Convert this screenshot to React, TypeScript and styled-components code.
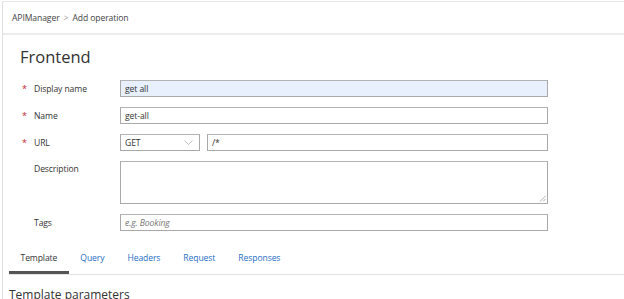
import React from "react";
import styled, { createGlobalStyle } from "styled-components";

const Global = createGlobalStyle`
  html, body { margin: 0; padding: 0; background: #fff; }
  body { font-family: "Open Sans", "Noto Sans", sans-serif; color: #333; overflow: hidden; }
  * { box-sizing: border-box; }
`;

const Page = styled.div`
  margin: 1px 0 0 2px;
  border-top: 1px solid #e6e6e6;
  border-left: 1px solid #e0e0e0;
  min-height: 298px;
`;

const Header = styled.div`
  height: 33px;
  border-bottom: 2px solid #ececec;
  display: flex;
  align-items: center;
  padding-left: 9px;
  font-size: 8.6px;
  color: #444;
  letter-spacing: -0.1px;
`;

const Sep = styled.span`
  color: #999;
  margin: 0 4px;
`;

const Title = styled.h1`
  margin: 12px 0 0 17px;
  font-size: 16.5px;
  font-weight: 400;
  color: #333;
  line-height: 20px;
`;

const Form = styled.div`
  display: flex;
  flex-direction: column;
  gap: 10px;
  margin-top: 13px;
`;

const Row = styled.div<{ $top?: boolean }>`
  display: grid;
  grid-template-columns: 117px 428px;
  align-items: ${(p) => (p.$top ? "start" : "center")};
`;

const Label = styled.div<{ $pt?: number }>`
  display: flex;
  align-items: center;
  font-size: 8.6px;
  color: #333;
  padding-left: 19px;
  padding-top: ${(p) => p.$pt ?? 0}px;
  letter-spacing: -0.1px;
`;

const Star = styled.span<{ $hidden?: boolean }>`
  color: #c4262e;
  width: 12px;
  font-size: 9px;
  visibility: ${(p) => (p.$hidden ? "hidden" : "visible")};
`;

const Input = styled.div<{ $filled?: boolean; $placeholder?: boolean; $h?: number }>`
  height: ${(p) => p.$h ?? 17}px;
  border: 1px solid #a9a9a9;
  border-top-color: #b3b3b3;
  background: ${(p) => (p.$filled ? "#e8f0fe" : "#fff")};
  font-size: 8.6px;
  padding: 0 4px;
  display: flex;
  align-items: center;
  color: ${(p) => (p.$placeholder ? "#777" : "#333")};
  font-style: ${(p) => (p.$placeholder ? "italic" : "normal")};
  position: relative;
  letter-spacing: -0.1px;
`;

const UrlGroup = styled.div`
  display: grid;
  grid-template-columns: 80px 1fr;
  gap: 7px;
`;

const Select = styled(Input)`
  justify-content: space-between;
  padding-right: 6px;
`;

const Grip = styled.svg`
  position: absolute;
  right: 1px;
  bottom: 1px;
`;

const Tabs = styled.div`
  margin: 22px 0 0 6px;
  display: flex;
  border-bottom: 1px solid #e3e3e3;
`;

const Tab = styled.div<{ $active?: boolean }>`
  padding: 0 11.5px;
  height: 21px;
  line-height: 11px;
  font-size: 8.6px;
  letter-spacing: -0.1px;
  color: ${(p) => (p.$active ? "#333" : "#1f6fc5")};
  border-bottom: 3px solid ${(p) => (p.$active ? "#555" : "transparent")};
`;

const Section = styled.div`
  margin: 12px 0 0 6px;
  font-size: 12px;
  line-height: 16px;
  color: #333;
`;

export default function App() {
  return (
    <>
      <Global />
      <Page>
        <Header>
          APIManager<Sep>&gt;</Sep>Add operation
        </Header>
        <Title>Frontend</Title>
        <Form>
          <Row>
            <Label><Star>*</Star>Display name</Label>
            <Input $filled>get all</Input>
          </Row>
          <Row>
            <Label><Star>*</Star>Name</Label>
            <Input>get-all</Input>
          </Row>
          <Row>
            <Label><Star>*</Star>URL</Label>
            <UrlGroup>
              <Select>
                GET
                <svg width="9" height="5" viewBox="0 0 9 5">
                  <path d="M0.5 0.5 L4.5 4.5 L8.5 0.5" fill="none" stroke="#b0b0b0" strokeWidth="0.8" />
                </svg>
              </Select>
              <Input>/*</Input>
            </UrlGroup>
          </Row>
          <Row $top>
            <Label $pt={1}><Star $hidden>*</Star>Description</Label>
            <Input $h={43}>
              <Grip width="7" height="7" viewBox="0 0 7 7">
                <path d="M6.5 1 L1 6.5 M6.5 4 L4 6.5" stroke="#999" strokeWidth="0.8" />
              </Grip>
            </Input>
          </Row>
          <Row>
            <Label><Star $hidden>*</Star>Tags</Label>
            <Input $placeholder>e.g. Booking</Input>
          </Row>
        </Form>
        <Tabs>
          <Tab $active>Template</Tab>
          <Tab>Query</Tab>
          <Tab>Headers</Tab>
          <Tab>Request</Tab>
          <Tab>Responses</Tab>
        </Tabs>
        <Section>Template parameters</Section>
      </Page>
    </>
  );
}
